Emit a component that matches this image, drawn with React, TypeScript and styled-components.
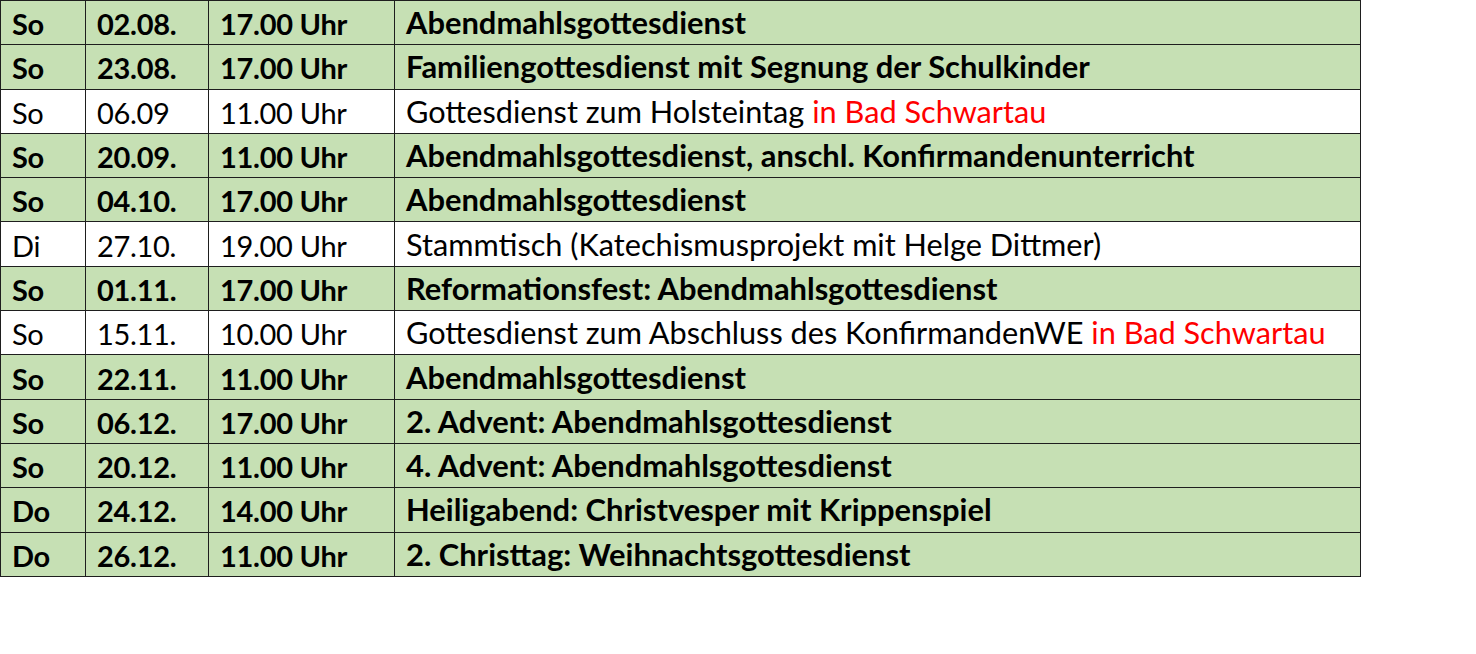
import React from "react";
import styled, { createGlobalStyle } from "styled-components";

interface Termin {
  day: string;
  date: string;
  time: string;
  title: string;
  place?: string;
  highlight: boolean;
}

const termine: Termin[] = [
  { day: "So", date: "02.08.", time: "17.00 Uhr", title: "Abendmahlsgottesdienst", highlight: true },
  { day: "So", date: "23.08.", time: "17.00 Uhr", title: "Familiengottesdienst mit Segnung der Schulkinder", highlight: true },
  { day: "So", date: "06.09", time: "11.00 Uhr", title: "Gottesdienst zum Holsteintag ", place: "in Bad Schwartau", highlight: false },
  { day: "So", date: "20.09.", time: "11.00 Uhr", title: "Abendmahlsgottesdienst, anschl. Konfirmandenunterricht", highlight: true },
  { day: "So", date: "04.10.", time: "17.00 Uhr", title: "Abendmahlsgottesdienst", highlight: true },
  { day: "Di", date: "27.10.", time: "19.00 Uhr", title: "Stammtisch (Katechismusprojekt mit Helge Dittmer)", highlight: false },
  { day: "So", date: "01.11.", time: "17.00 Uhr", title: "Reformationsfest: Abendmahlsgottesdienst", highlight: true },
  { day: "So", date: "15.11.", time: "10.00 Uhr", title: "Gottesdienst zum Abschluss des KonfirmandenWE ", place: "in Bad Schwartau", highlight: false },
  { day: "So", date: "22.11.", time: "11.00 Uhr", title: "Abendmahlsgottesdienst", highlight: true },
  { day: "So", date: "06.12.", time: "17.00 Uhr", title: "2. Advent: Abendmahlsgottesdienst", highlight: true },
  { day: "So", date: "20.12.", time: "11.00 Uhr", title: "4. Advent: Abendmahlsgottesdienst", highlight: true },
  { day: "Do", date: "24.12.", time: "14.00 Uhr", title: "Heiligabend: Christvesper mit Krippenspiel", highlight: true },
  { day: "Do", date: "26.12.", time: "11.00 Uhr", title: "2. Christtag: Weihnachtsgottesdienst", highlight: true },
];

const GlobalStyle = createGlobalStyle`
  html, body {
    margin: 0;
    padding: 0;
    background: #ffffff;
  }
`;

const Table = styled.table`
  border-collapse: collapse;
  width: 1360px;
  table-layout: fixed;
  font-family: Lato, "Open Sans", sans-serif;
  color: #000;
`;

const Col = styled.col<{ $width: number }>`
  width: ${(p) => p.$width}px;
`;

const Row = styled.tr<{ $highlight: boolean }>`
  height: 44.3px;
  background: ${(p) => (p.$highlight ? "#c6e0b4" : "#ffffff")};
  font-weight: ${(p) => (p.$highlight ? 700 : 400)};
`;

const Cell = styled.td`
  border: 1.5px solid #1e1e1e;
  padding: 2px 0 0 11px;
  white-space: nowrap;
  overflow: hidden;
  vertical-align: middle;
  line-height: 1;
  font-size: 29px;
  letter-spacing: -0.3px;
`;

const TitleCell = styled(Cell)<{ $bold: boolean }>`
  font-size: ${(p) => (p.$bold ? "30.9px" : "30.7px")};
  letter-spacing: 0;
`;

const Place = styled.span`
  color: #ff0000;
`;

export default function App() {
  return (
    <>
      <GlobalStyle />
      <Table>
        <colgroup>
          <Col $width={85} />
          <Col $width={123} />
          <Col $width={186} />
          <Col $width={966} />
        </colgroup>
        <tbody>
          {termine.map((t, i) => (
            <Row key={i} $highlight={t.highlight}>
              <Cell>{t.day}</Cell>
              <Cell>{t.date}</Cell>
              <Cell>{t.time}</Cell>
              <TitleCell $bold={t.highlight}>
                {t.title}
                {t.place && <Place>{t.place}</Place>}
              </TitleCell>
            </Row>
          ))}
        </tbody>
      </Table>
    </>
  );
}
